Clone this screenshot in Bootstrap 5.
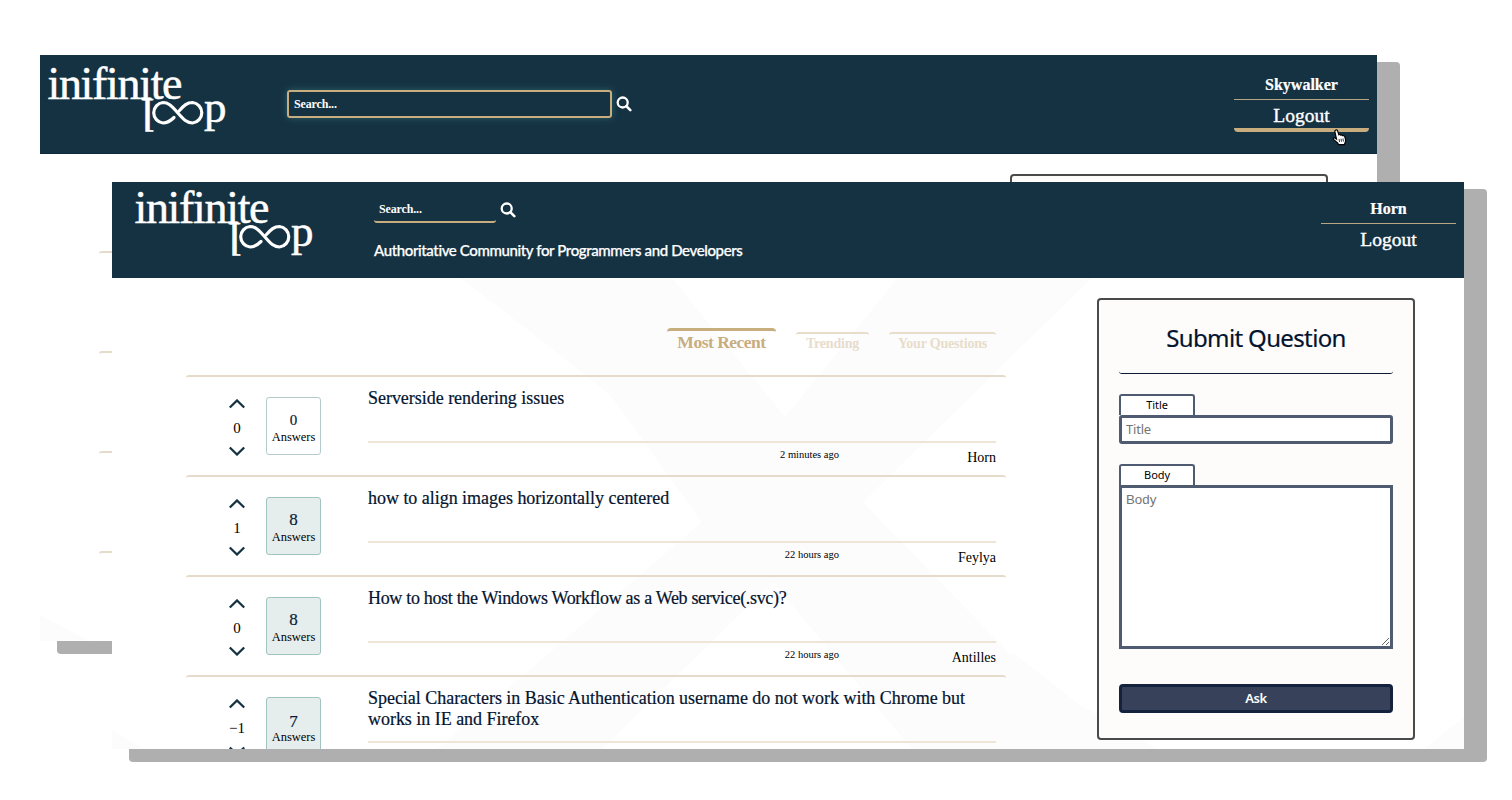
<!DOCTYPE html>
<html lang="en">
<head>
<meta charset="utf-8">
<title>Infinite Loop</title>
<meta name="viewport" content="width=device-width, initial-scale=1">
<link href="https://cdn.jsdelivr.net/npm/bootstrap@5.3.0/dist/css/bootstrap.min.css" rel="stylesheet">
<style>
  body { background: #fff; height: 800px; overflow: hidden; font-family: "Liberation Serif", serif; color: #000; }
  .desk { position: relative; width: 1512px; height: 800px; overflow: hidden; }
  /* overlapping windows, each with a hard offset shadow */
  .win-shade { position: absolute; background: #afafaf; border-radius: 4px; }
  .win { position: absolute; background: #fff; overflow: hidden; isolation: isolate; }
  .win-back { left: 40px; top: 55px; width: 1337px; height: 586px; }
  .shade-back { left: 57px; top: 62px; width: 1343px; height: 592px; }
  .win-front { left: 112px; top: 182px; width: 1352px; height: 567px; }
  .shade-front { left: 129px; top: 189px; width: 1358px; height: 573px; }
  .backdrop-art { position: absolute; inset: 0; z-index: 0; }
  .topbar { background: #153243; color: #fff; position: relative; z-index: 1; }
  .win-front .topbar { height: 96px; }
  .win-back .topbar { height: 99px; border-bottom: 1px solid #0f2a3c; }
  .logo { overflow: visible; }
  .logo text { font-family: "Liberation Serif", serif; fill: #fff; stroke: #fff; stroke-width: .5; }
  .search-field { font: bold 12px/16px "Liberation Serif", serif; letter-spacing: -.15px; color: #fff; }
  .search-line { width: 122px; height: 27px; border-bottom: 2px solid #c8ad7f; border-radius: 3px; padding: 5px 5px 0; }
  .search-box { width: 325px; height: 28px; border: 2px solid #c8ad7f; border-radius: 3px; padding: 4px 5px 0; box-shadow: 0 0 7px #2c6166; }
  .tagline { font: 500 15px/20px Lato, sans-serif; letter-spacing: -.38px; -webkit-text-stroke: .25px #fff; white-space: nowrap; }
  .account { width: 135px; text-align: center; }
  .account-name { font-weight: bold; font-size: 16px; line-height: 20px; height: 25px; border-bottom: 1px solid #b7a583; -webkit-text-stroke: .2px #fff; }
  .account-out { font-size: 19.5px; line-height: 26px; height: 33px; padding-top: 3px; -webkit-text-stroke: .4px #fff; }
  .account-out.hot { border-bottom: 4px solid #c8ad7f; border-radius: 0 0 4px 4px; height: 32px; }
  .cursor-hand { position: absolute; left: 1290px; top: 73px; z-index: 3; }

  .board { width: 820px; }
  .tab-item { color: #e8dccb; border-top: 2px solid #e8dccb; border-radius: 3px 3px 0 0; font-size: 14px; line-height: 20px; letter-spacing: -.2px; font-weight: bold; text-align: center; white-space: nowrap; }
  .tab-item.active { color: #c8ad7f; border-top: 3px solid #c8ad7f; border-radius: 4px 4px 0 0; font-size: 17.5px; line-height: 23px; letter-spacing: -.5px; }
  .question { height: 100px; border-top: 2px solid #e6dacb; border-radius: 3px; padding-right: 10px; }
  .votes { width: 40px; margin-left: 31px; padding-top: 22px; font-size: 15px; line-height: 18px; }
  .vote-count { margin: 10px 0 9px; }
  .answers { width: 55px; height: 58px; margin: 20px 0 0 9px; border: 1px solid #b3cccb; border-radius: 3px; text-align: center; padding-top: 13px; }
  .answers.some { background: #e5eeed; border-color: #a2c3c0; }
  .answers .num { font-size: 17px; line-height: 18px; color: #0b1c38; -webkit-text-stroke: .2px #0b1c38; }
  .answers .num.none { font-size: 15px; line-height: 19px; height: 18px; }
  .answers .num.low { padding-top: 2px; height: 18px; }
  .answers .lbl { font-size: 12.5px; line-height: 17px; }
  .entry { margin-left: 47px; width: 628px; }
  .entry-title { height: 64px; padding-top: 11px; font-size: 18px; line-height: 21px; color: #04142f; -webkit-text-stroke: .2px #04142f; letter-spacing: -.03px; }
  .entry-title.snug { letter-spacing: -.32px; }
  .entry-meta { border-top: 2px solid #ece5d8; }
  .ago { width: 471px; text-align: right; font-size: 10.5px; line-height: 14px; padding-top: 5px; }
  .author { font-size: 14px; line-height: 18px; padding-top: 6px; }

  .ask-card { width: 318px; height: 442px; border: 2px solid #4a4a4a; border-radius: 4px; background: #fdfcfb; padding: 0 20px; font-family: "Noto Sans", sans-serif; position: relative; z-index: 1; }
  .ask-head { height: 74px; padding-top: 22px; font-size: 24px; line-height: 32px; letter-spacing: -.64px; text-align: center; color: #04142f; -webkit-text-stroke: .2px #04142f; border-bottom: 1px solid #0c1c34; border-radius: 3px; }
  .tag-label { width: 76px; height: 21px; border: 2px solid #4f5b70; border-bottom: 0; border-radius: 3px 3px 0 0; background: #fff; font-size: 11px; line-height: 18px; letter-spacing: -.1px; text-align: center; }
  .fld { border: 3px solid #4f5b70; background: #fff; width: 274px; display: block; padding: 2px 4px; font-size: 13px; line-height: 18px; color: #000; outline: 0; }
  .fld::placeholder { color: #757575; opacity: 1; }
  .fld-title { height: 29px; border-radius: 3px; padding-top: 1px; font-family: "Noto Sans", sans-serif; letter-spacing: -.2px; }
  .fld-body { height: 164px; border-radius: 0; padding-top: 3px; font-family: "Liberation Sans", sans-serif; font-size: 13.3px; resize: both; }
  .ask-btn { width: 274px; height: 29px; border: 3px solid #14223d; border-radius: 4px; background: #37425a; color: #fff; font: 600 13px/21px "Noto Sans", sans-serif; letter-spacing: -.5px; padding: 0; }
</style>
</head>
<body>
<svg width="0" height="0" class="position-absolute">
  <symbol id="lens" viewBox="0 0 16 16">
    <circle cx="6.700" cy="6.500" r="5" fill="none" stroke="#fff" stroke-width="2.300"/>
    <path d="M10.300 10.200l4 4" stroke="#fff" stroke-width="2.600" stroke-linecap="round"/>
  </symbol>
  <symbol id="loops" viewBox="0 0 182 70"><path d="M126 54.500C122 58.500 119 60 115 60A10.300 10.300 0 0 1 115 39.500C120 39.500 123 42 129.500 49.500C136 57 139 60 144.500 60A10.300 10.300 0 0 0 144.500 39.500C139 39.500 136 42.500 131.500 47.500" fill="none" stroke="#fff" stroke-width="3.200" stroke-linecap="round"/></symbol>
  <symbol id="up" viewBox="0 0 16 10"><path d="M.800 8.500l7.200-7 7.200 7" fill="none" stroke="#153243" stroke-width="2.300"/></symbol>
  <symbol id="down" viewBox="0 0 16 10"><path d="M.800 1.500l7.200 7 7.200-7" fill="none" stroke="#153243" stroke-width="2.300"/></symbol>
</svg>

<main class="desk">
  <div class="win-shade shade-back"></div>
  <section class="win win-back">
    <svg class="backdrop-art" width="1337" height="586"><path d="M0 560l50 26H0z" fill="#fcfcfc"/></svg>
    <header class="topbar d-flex align-items-start">
      <svg class="logo" style="margin:8px 0 0 8px" width="182" height="70">
        <text x="-0.500" y="36" font-size="46" textLength="135">inifinite</text>
        <text font-size="47" transform="translate(106 36) rotate(180)">l</text>
        <use href="#loops"/>
        <text x="156" y="58.500" font-size="45">p</text>
      </svg>
      <div class="d-flex" style="margin:35px 0 0 57px">
        <div class="search-field search-box">Search...</div>
        <svg width="16" height="16" style="margin:6px 0 0 4px"><use href="#lens"/></svg>
      </div>
      <div class="account ms-auto me-2" style="margin-top:20px">
        <div class="account-name">Skywalker</div>
        <div class="account-out hot">Logout</div>
      </div>
    </header>
    <svg class="cursor-hand" width="20" height="20" viewBox="0 0 20 20"><path d="M5.500 2.200c1-.7 1.900 0 2.200.9l1.200 3.700c.8-.5 1.600-.3 2 .4.800-.4 1.600-.1 1.900.5.900-.3 1.700 0 2 1l.8 3.200c.2 1.500-.4 2.500-.9 3.800l-.3 1H8.500L7.800 15 3.500 11.400c-.7-.8.400-2 1.500-1.300l1.500 1L4.800 3.500c-.1-.6.200-1 .7-1.300z" fill="#fff" stroke="#000" stroke-width="1.200"/><path d="M9 11l.6 3M11 10.700l.5 3M13 10.500l.4 3" stroke="#000" stroke-width=".8"/></svg>
    <div class="d-flex align-items-start justify-content-between" style="padding:20px 49px 0 59px">
      <div class="board" style="margin-top:77px">
        <div class="question"></div><div class="question"></div><div class="question"></div><div class="question"></div>
      </div>
      <div class="ask-card"></div>
    </div>
  </section>

  <div class="win-shade shade-front"></div>
  <section class="win win-front">
    <svg class="backdrop-art" width="1352" height="567" fill="#fcfcfc">
      <path d="M348 96H560L673 235 786 96H980L751 320 990 567H800L661 400 490 567H325L590 340 498 213Q420 150 348 96z"/>
      <path d="M0 548l32 19H0zM900 470L968 523 1045 567H830zM1352 535l-40 32h40z"/>
    </svg>
    <header class="topbar d-flex align-items-start">
      <svg class="logo" style="margin:5px 0 0 23px" width="182" height="70">
        <text x="-0.500" y="36" font-size="46" textLength="135">inifinite</text>
        <text font-size="47" transform="translate(106 36) rotate(180)">l</text>
        <use href="#loops"/>
        <text x="156" y="58.500" font-size="45">p</text>
      </svg>
      <div style="margin:14px 0 0 57px">
        <div class="d-flex">
          <div class="search-field search-line">Search...</div>
          <svg width="16" height="16" style="margin:6px 0 0 4px"><use href="#lens"/></svg>
        </div>
        <div class="tagline" style="margin-top:17px">Authoritative Community for Programmers and Developers</div>
      </div>
      <div class="account ms-auto me-2" style="margin-top:17px">
        <div class="account-name">Horn</div>
        <div class="account-out">Logout</div>
      </div>
    </header>
    <div class="d-flex align-items-start justify-content-between position-relative" style="padding:20px 49px 0 74px">
      <div class="board">
        <nav class="d-flex justify-content-end align-items-start" style="height:77px;gap:20px;padding:30px 10px 0 0">
          <div class="tab-item active" style="width:109px">Most Recent</div>
          <div class="tab-item" style="width:73px;margin-top:4px">Trending</div>
          <div class="tab-item" style="width:107px;margin-top:4px">Your Questions</div>
        </nav>
        <article class="question d-flex align-items-start">
          <div class="votes d-flex flex-column align-items-center"><svg width="16" height="10"><use href="#up"/></svg><span class="vote-count">0</span><svg width="16" height="10"><use href="#down"/></svg></div>
          <div class="answers"><div class="num none">0</div><div class="lbl">Answers</div></div>
          <div class="entry"><div class="entry-title">Serverside rendering issues</div>
            <div class="entry-meta d-flex justify-content-between"><div class="ago">2 minutes ago</div><div class="author">Horn</div></div></div>
        </article>
        <article class="question d-flex align-items-start">
          <div class="votes d-flex flex-column align-items-center"><svg width="16" height="10"><use href="#up"/></svg><span class="vote-count">1</span><svg width="16" height="10"><use href="#down"/></svg></div>
          <div class="answers some"><div class="num">8</div><div class="lbl">Answers</div></div>
          <div class="entry"><div class="entry-title">how to align images horizontally centered</div>
            <div class="entry-meta d-flex justify-content-between"><div class="ago">22 hours ago</div><div class="author">Feylya</div></div></div>
        </article>
        <article class="question d-flex align-items-start">
          <div class="votes d-flex flex-column align-items-center"><svg width="16" height="10"><use href="#up"/></svg><span class="vote-count">0</span><svg width="16" height="10"><use href="#down"/></svg></div>
          <div class="answers some"><div class="num">8</div><div class="lbl">Answers</div></div>
          <div class="entry"><div class="entry-title snug">How to host the Windows Workflow as a Web service(.svc)?</div>
            <div class="entry-meta d-flex justify-content-between"><div class="ago">22 hours ago</div><div class="author">Antilles</div></div></div>
        </article>
        <article class="question d-flex align-items-start">
          <div class="votes d-flex flex-column align-items-center"><svg width="16" height="10"><use href="#up"/></svg><span class="vote-count">−1</span><svg width="16" height="10"><use href="#down"/></svg></div>
          <div class="answers some"><div class="num low">7</div><div class="lbl">Answers</div></div>
          <div class="entry"><div class="entry-title">Special Characters in Basic Authentication username do not work with Chrome but<br>works in IE and Firefox</div>
            <div class="entry-meta"></div></div>
        </article>
      </div>
      <form class="ask-card">
        <div class="ask-head">Submit Question</div>
        <div class="tag-label" style="margin-top:20px">Title</div>
        <input class="fld fld-title" placeholder="Title">
        <div class="tag-label" style="margin-top:20px">Body</div>
        <textarea class="fld fld-body" placeholder="Body"></textarea>
        <button type="button" class="ask-btn" style="margin-top:35px">Ask</button>
      </form>
    </div>
  </section>
</main>
<script src="https://cdn.jsdelivr.net/npm/bootstrap@5.3.0/dist/js/bootstrap.bundle.min.js"></script>
</body>
</html>
